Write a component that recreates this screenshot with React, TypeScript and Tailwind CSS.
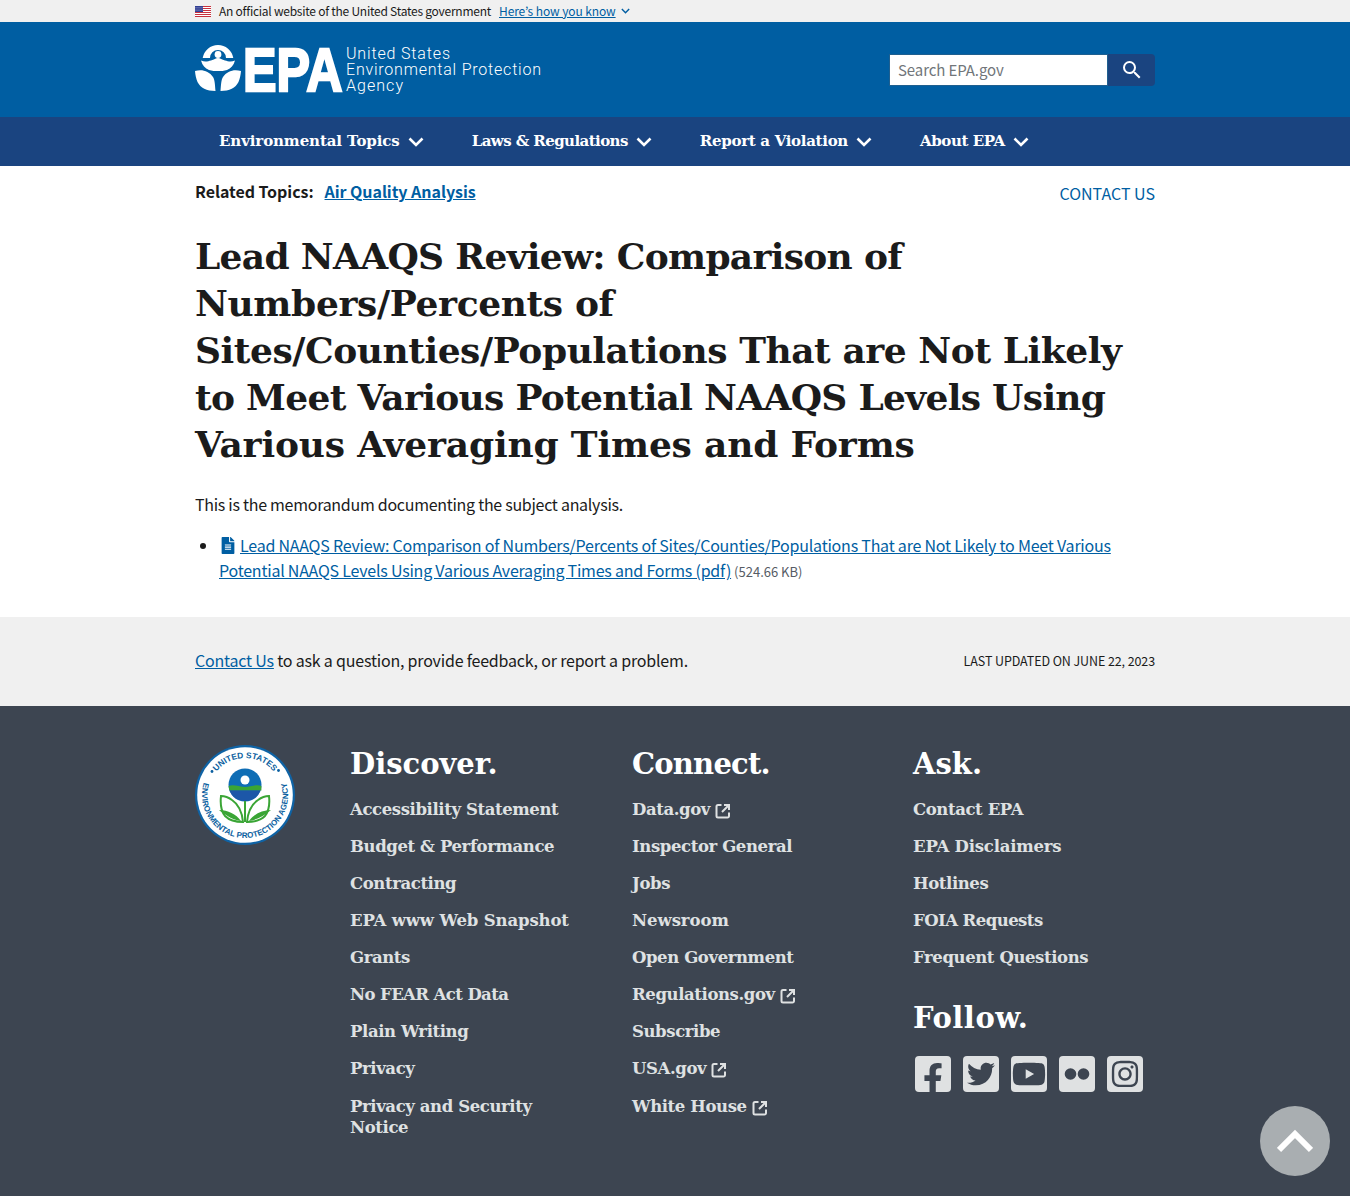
import React from "react";
import { MdSearch } from "react-icons/md";
import { FaFacebookF, FaTwitter, FaYoutube, FaInstagram, FaFileAlt } from "react-icons/fa";

const Chevron = ({ className = "" }: { className?: string }) => (
  <svg viewBox="0 0 16 10" className={className} fill="none" stroke="currentColor" strokeWidth="2.600">
    <path d="M1.500 1.500 8 8l6.500-6.500" />
  </svg>
);

const Flag = () => (
  <svg viewBox="0 0 16 11" className="w-4 h-[11px] shrink-0">
    <rect width="16" height="11" fill="#fff" />
    {[0, 2, 4, 6, 8, 10].map((y) => (
      <rect key={y} y={y} width="16" height="1" fill="#c8313e" />
    ))}
    <rect width="8" height="6" fill="#2b3990" />
    {[1, 3, 5, 7].map((x) => [1.2, 3, 4.8].map((y) => <circle key={x + "-" + y} cx={x} cy={y} r=".45" fill="#fff" />))}
  </svg>
);

const Logo = () => (
  <svg viewBox="0 0 347 50" className="w-[347px] h-[50px] block overflow-visible">
    <g fill="#fff">
      <path d="M23 0a15.500 15.500 0 0 1 15.300 13H31a8 8 0 1 0-16 0H7.700A15.500 15.500 0 0 1 23 0z" />
      <circle cx="23" cy="9.500" r="3.400" />
      <path d="M6 15.500c4 1.800 7 .8 10 0 3-1 5-2.500 7-2.500s4 1.500 7 2.500c3 .8 6 1.800 10 0-1.500 5-4 8-8 9.500-3 1-6 1-9 1s-6 0-9-1c-4-1.500-6.500-4.500-8-9.500z" />
      <path d="M0 26c7-2 14 0 18 6 2 3 2 9 2.500 14-9 0-15-3-18-9C1 33 .3 30 0 26z" />
      <path d="M46 26c-7-2-14 0-18 6-2 3-2 9-2.500 14 9 0 15-3 18-9 1.500-4 2.200-7 2.500-11z" />
    </g>
    <text transform="translate(48 45.500) scale(.81 1)" fill="#fff" stroke="#fff" strokeWidth="2.400" fontFamily="'Liberation Sans',sans-serif" fontWeight="700" fontSize="62">EPA</text>
    <g fill="#fff" fontFamily="Roboto,sans-serif" fontWeight="300" fontSize="16">
      <text x="151" y="13.500" textLength="104" lengthAdjust="spacing">United States</text>
      <text x="151" y="30" textLength="195" lengthAdjust="spacing">Environmental Protection</text>
      <text x="151" y="46" textLength="57" lengthAdjust="spacing">Agency</text>
    </g>
  </svg>
);

const Seal = () => (
  <svg viewBox="0 0 100 100" className="w-[100px] h-[100px] block shrink-0">
    <defs>
      <path id="sealTop" d="M13 50a37 37 0 0 1 74 0" />
      <path id="sealBottom" d="M12.800 28.500a43 43 0 1 0 74.400 0" />
    </defs>
    <circle cx="50" cy="50" r="50" fill="#0f63a5" />
    <circle cx="50" cy="50" r="47.800" fill="#fff" />
    <text fill="#0b5fa0" fontSize="8.400" fontWeight="700" fontFamily="'Liberation Sans',sans-serif">
      <textPath href="#sealTop" startOffset="50%" textAnchor="middle">UNITED STATES</textPath>
    </text>
    <text fill="#0b5fa0" fontSize="8" fontWeight="700" fontFamily="'Liberation Sans',sans-serif">
      <textPath href="#sealBottom" startOffset="50%" textAnchor="middle">ENVIRONMENTAL PROTECTION AGENCY</textPath>
    </text>
    <circle cx="17" cy="26.500" r="1.400" fill="#0b5fa0" />
    <circle cx="83.500" cy="25.500" r="1.400" fill="#0b5fa0" />
    <circle cx="50" cy="40" r="16.500" fill="#0f6db5" />
    <path d="M33.600 41c5-2 11 1 16.400 1s11-3 16.400-1v4.500H34.300z" fill="#3aa535" />
    <path d="M34.500 45.500h31a16.500 16.500 0 0 1-31 0z" fill="#1c57a8" />
    <circle cx="50" cy="35" r="4.500" fill="#fff" />
    <path d="M50 56v21M48 77c-1-11-5-18-11-22-4-3-8-4-11-4-1 9 0 15 4 20 4 4 11 6 18 6zM52 77c1-11 5-18 11-22 4-3 8-4 11-4 1 9 0 15-4 20-4 4-11 6-18 6z" fill="none" stroke="#3aa535" strokeWidth="2" />
    <path d="M46 76c-7-1-15-5-22-11 9 0 17 4 22 11zM54 76c7-1 15-5 22-11-9 0-17 4-22 11z" fill="#3aa535" />
  </svg>
);

const Ext = () => (
  <svg viewBox="0 0 16 16" className="inline-block w-4 h-4 ml-[5px] align-[-4px] text-[#dfe1e2]" fill="none" stroke="currentColor" strokeWidth="2">
    <path d="M6.500 2H3a1.500 1.500 0 0 0-1.500 1.500v9.500A1.500 1.500 0 0 0 3 14.500h9.500A1.500 1.500 0 0 0 14 13V9.500" />
    <path d="M9 2h5v5M14 2 7 9" />
  </svg>
);

const SocialBox = ({ children, label }: { children: React.ReactNode; label: string }) => (
  <div aria-label={label} className="relative w-9 h-9 rounded-[4px] bg-[#dfe1e2] text-[#3d4551] overflow-hidden flex items-center justify-center">
    {children}
  </div>
);

const FooterLink = ({ children, className = "", track = "tracking-[-0.4px]" }: { children: React.ReactNode; className?: string; track?: string }) => (
  <li className={"text-[#dfe1e2] text-[16.500px] leading-[21px] mb-4 " + track + " " + className}>{children}</li>
);

const FooterHeading = ({ children, className = "" }: { children: React.ReactNode; className?: string }) => (
  <h2 className={"text-white text-[29px] font-bold leading-[40px] " + className}>{children}</h2>
);

const sans = "font-['Noto_Sans_CJK_JP','Noto_Sans',sans-serif]";

export default function App() {
  return (
    <div className={"min-h-[1196px] bg-white text-[#1b1b1b] relative overflow-hidden " + sans}>
      <div className="h-[22px] bg-[#f0f0f0]">
        <div className="w-[960px] mx-auto h-full flex items-center text-[12px] tracking-[-0.25px]">
          <Flag />
          <span className="ml-2">An official website of the United States government</span>
          <a className="ml-2 text-[#005ea2] underline tracking-[-0.1px]">Here’s how you know</a>
          <Chevron className="ml-[5px] w-[9px] h-[6px] text-[#005ea2]" />
        </div>
      </div>

      <header className="h-[95px] bg-[#005ea2]">
        <div className="w-[960px] mx-auto h-full flex items-center justify-between">
          <Logo />
          <div className="flex items-center">
            <div className="w-[219px] h-[32px] bg-white border border-[#1f5f8f] flex items-center pl-2 pt-[1px] text-[15px] tracking-[-0.1px] text-[#71767a]">Search EPA.gov</div>
            <div className="w-[47px] h-[32px] bg-[#1a4480] rounded-r-[4px] flex items-center justify-center text-white">
              <MdSearch className="w-6 h-6" />
            </div>
          </div>
        </div>
      </header>

      <nav className="h-[49px] bg-[#1a4480]">
        <div className="w-[960px] mx-auto h-full flex items-center pl-6 gap-12 text-white font-['DejaVu_Serif',serif] font-bold text-[15px]">
          <span className="flex items-center gap-2 tracking-[-0.1px]">Environmental Topics <Chevron className="w-4 h-[10px]" /></span>
          <span className="flex items-center gap-2 tracking-[-0.57px]">Laws &amp; Regulations <Chevron className="w-4 h-[10px]" /></span>
          <span className="flex items-center gap-2 tracking-[-0.3px]">Report a Violation <Chevron className="w-4 h-[10px]" /></span>
          <span className="flex items-center gap-2 tracking-[-0.4px]">About EPA <Chevron className="w-4 h-[10px]" /></span>
        </div>
      </nav>

      <main className="w-[960px] mx-auto pb-[33px]">
        <div className="h-[67px] flex justify-between text-[16px]">
          <div className="pt-[13px] leading-6 flex tracking-[-0.05px]">
            <span className="font-bold">Related Topics:</span>
            <a className="ml-[11px] font-bold text-[#005ea2] underline">Air Quality Analysis</a>
          </div>
          <a className="pt-[15px] leading-6 text-[#005ea2]">CONTACT US</a>
        </div>
        <h1 className="font-['DejaVu_Serif',serif] font-bold text-[36px] leading-[47px]">
          <div className="tracking-[-0.7px]">Lead NAAQS Review: Comparison of</div>
          <div className="tracking-[-0.36px]">Numbers/Percents of</div>
          <div className="tracking-[-0.44px]">Sites/Counties/Populations That are Not Likely</div>
          <div className="tracking-[-0.7px]">to Meet Various Potential NAAQS Levels Using</div>
          <div className="tracking-[-0.17px]">Various Averaging Times and Forms</div>
        </h1>
        <p className="mt-[24px] text-[16px] tracking-[-0.28px] leading-[25px]">This is the memorandum documenting the subject analysis.</p>
        <ul className="mt-[16px] pl-6 list-disc text-[16px] tracking-[-0.22px] leading-[25px]">
          <li>
            <FaFileAlt className="inline-block w-[14px] h-[17px] mr-[5px] ml-[2px] align-[-2px] text-[#005ea2]" />
            <a className="text-[#005ea2] underline">Lead NAAQS Review: Comparison of Numbers/Percents of Sites/Counties/Populations That are Not Likely to Meet Various Potential NAAQS Levels Using Various Averaging Times and Forms (pdf)</a>
            <span className="ml-[3px] text-[13px] tracking-normal text-[#565c65]">(524.66 KB)</span>
          </li>
        </ul>
      </main>

      <section className="h-[89px] bg-[#f0f0f0]">
        <div className="w-[960px] mx-auto h-full flex items-center justify-between pb-[4px]">
          <p className="text-[16px] tracking-[-0.2px]"><a className="text-[#005ea2] underline">Contact Us</a> to ask a question, provide feedback, or report a problem.</p>
          <p className="pt-[4px] text-[12.500px] tracking-[-0.1px]">LAST UPDATED ON JUNE 22, 2023</p>
        </div>
      </section>

      <footer className="h-[490px] bg-[#3d4551] pt-[38px] font-['DejaVu_Serif',serif] font-bold">
        <div className="w-[960px] mx-auto flex">
          <div className="w-[155px] pt-[1px]"><Seal /></div>
          <div className="w-[282px] pr-[50px]">
            <FooterHeading className="mb-[15px]">Discover.</FooterHeading>
            <ul>
              <FooterLink>Accessibility Statement</FooterLink>
              <FooterLink>Budget &amp; Performance</FooterLink>
              <FooterLink>Contracting</FooterLink>
              <FooterLink track="tracking-[-0.15px]">EPA www Web Snapshot</FooterLink>
              <FooterLink>Grants</FooterLink>
              <FooterLink track="tracking-[-0.6px]">No FEAR Act Data</FooterLink>
              <FooterLink>Plain Writing</FooterLink>
              <FooterLink className="mb-[17px]">Privacy</FooterLink>
              <FooterLink>Privacy and Security Notice</FooterLink>
            </ul>
          </div>
          <div className="w-[281px]">
            <FooterHeading className="mb-[15px] tracking-[-0.8px]">Connect.</FooterHeading>
            <ul>
              <FooterLink>Data.gov<Ext /></FooterLink>
              <FooterLink>Inspector General</FooterLink>
              <FooterLink>Jobs</FooterLink>
              <FooterLink track="tracking-[-0.05px]">Newsroom</FooterLink>
              <FooterLink>Open Government</FooterLink>
              <FooterLink>Regulations.gov<Ext /></FooterLink>
              <FooterLink>Subscribe</FooterLink>
              <FooterLink className="mb-[17px]">USA.gov<Ext /></FooterLink>
              <FooterLink>White House<Ext /></FooterLink>
            </ul>
          </div>
          <div className="flex-1">
            <FooterHeading className="mb-[15px]">Ask.</FooterHeading>
            <ul>
              <FooterLink>Contact EPA</FooterLink>
              <FooterLink track="tracking-[-0.2px]">EPA Disclaimers</FooterLink>
              <FooterLink>Hotlines</FooterLink>
              <FooterLink track="tracking-[-0.55px]">FOIA Requests</FooterLink>
              <FooterLink>Frequent Questions</FooterLink>
            </ul>
            <FooterHeading className="mt-[30px] mb-[18px] tracking-[0.5px]">Follow.</FooterHeading>
            <div className="flex gap-3 pl-[2px]">
              <SocialBox label="Facebook"><FaFacebookF className="w-[20px] h-[32px] translate-y-[5px]" /></SocialBox>
              <SocialBox label="Twitter"><FaTwitter className="w-[28px] h-[28px]" /></SocialBox>
              <SocialBox label="YouTube"><FaYoutube className="w-[34px] h-[34px]" /></SocialBox>
              <SocialBox label="Flickr">
                <svg viewBox="0 0 36 36" className="w-9 h-9"><circle cx="11.500" cy="18" r="5.800" fill="currentColor" /><circle cx="24.500" cy="18" r="5.800" fill="currentColor" /></svg>
              </SocialBox>
              <SocialBox label="Instagram"><FaInstagram className="w-[30px] h-[30px]" /></SocialBox>
            </div>
          </div>
        </div>
      </footer>

      <div className="fixed left-[1260px] top-[1106px] w-[70px] h-[70px] rounded-full bg-[#a9aeb1] flex items-center justify-center text-white">
        <svg viewBox="0 0 36 24" className="w-9 h-6" fill="none" stroke="currentColor" strokeWidth="6"><path d="M2 21 18 5l16 16" /></svg>
      </div>
    </div>
  );
}
